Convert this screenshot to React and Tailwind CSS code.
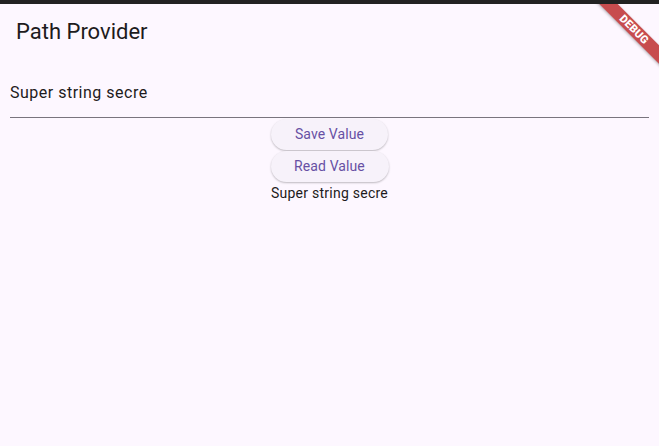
export default function App() {
  return (
    <div className="w-[659px] h-[446px] bg-[#fdf7ff] flex flex-col overflow-hidden" style={{ fontFamily: 'Roboto, "Noto Sans", sans-serif' }}>
      <div className="h-[4px] bg-[#222222] shrink-0" />
      <div className="relative flex-1 flex flex-col overflow-hidden">
        {/* App bar */}
        <div className="h-[56px] flex items-center px-4 shrink-0">
          <h1 className="text-[22px] text-[#1d1b20] leading-7">Path Provider</h1>
        </div>

        {/* Body */}
        <div className="flex flex-col items-center">
          <div className="w-full px-[10px]">
            <div className="pt-[21px] pb-[12px] border-b border-[#79747e] text-[16px] leading-6 text-[#1d1b20] tracking-[0.5px]">
              Super string secre
            </div>
          </div>
          <button className="mt-[1px] h-[31px] w-[117px] rounded-full bg-[#f7f2fa] text-[#6750a4] text-[14px] tracking-[0.1px] shadow-[0_1px_2px_rgba(0,0,0,0.25)]">
            Save Value
          </button>
          <button className="mt-[1px] h-[31px] w-[118px] rounded-full bg-[#f7f2fa] text-[#6750a4] text-[14px] tracking-[0.1px] shadow-[0_1px_2px_rgba(0,0,0,0.25)]">
            Read Value
          </button>
          <div className="text-[14px] leading-5 text-[#1d1b20] mt-[1px] tracking-[0.25px]">Super string secre</div>
        </div>

        {/* Debug banner */}
        <div className="absolute left-[584px] top-[19px] w-[100px] h-[13px] bg-[#b71c1c]/[0.78] rotate-45 flex items-center justify-center shadow-[0_1px_3px_rgba(0,0,0,0.3)]">
          <span className="text-white text-[11px] font-black leading-none tracking-[0.2px]">DEBUG</span>
        </div>
      </div>
    </div>
  )
}
